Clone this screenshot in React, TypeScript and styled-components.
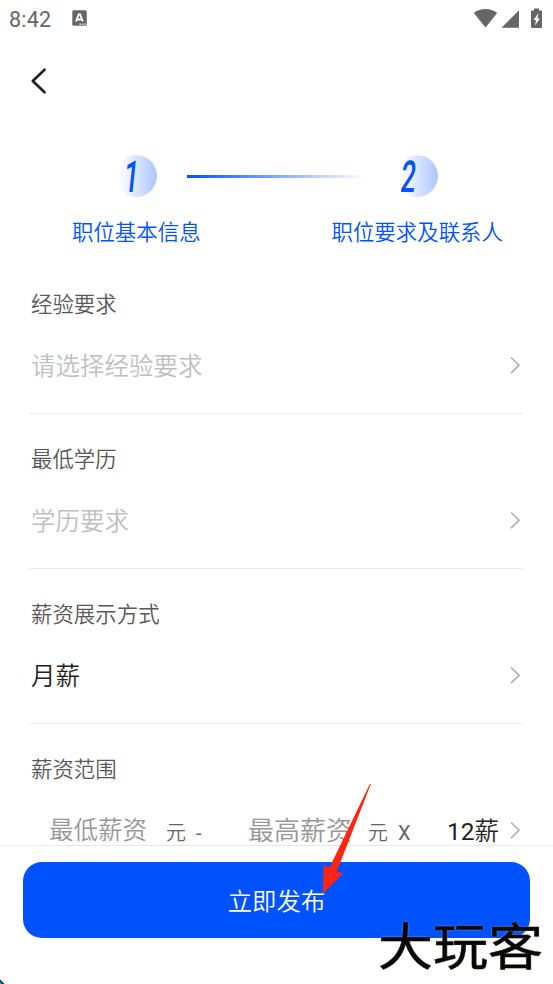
import React from 'react';
import styled, { createGlobalStyle } from 'styled-components';

const GlobalStyle = createGlobalStyle`
  * { box-sizing: border-box; }
  body { margin: 0; background: #fff; }
`;

const Screen = styled.div`
  position: relative;
  display: flex;
  flex-direction: column;
  width: 553px;
  height: 984px;
  overflow: hidden;
  background: #fff;
  font-family: Roboto, 'Noto Sans CJK SC', sans-serif;
  font-weight: 350;
`;

const StatusBar = styled.header`
  display: flex;
  align-items: center;
  height: 38px;
  padding: 0 10px 0 9px;
  color: #666;
`;

const Clock = styled.time`
  width: 63px;
  font-size: 21.5px;
  font-weight: 400;
  line-height: 38px;
  letter-spacing: 0.2px;
  padding-top: 1px;
`;

const StatusIcons = styled.div`
  display: flex;
  margin: -2px 0 0 auto;
`;

const NavBar = styled.nav`
  display: flex;
  height: 117px;
  padding: 29px 0 0 29px;
`;

const BackButton = styled.button`
  width: 20px;
  height: 28px;
  padding: 0;
  border: 0;
  background: none;
`;

const Steps = styled.section`
  height: 104px;
`;

const Markers = styled.div`
  display: flex;
  align-items: center;
  height: 42px;
  padding-left: 115px;
`;

const Marker = styled.div`
  display: flex;
  align-items: center;
  justify-content: center;
  width: 42px;
  height: 42px;
  border-radius: 50%;
  background: linear-gradient(90deg, #fff 8%, #dbe6ff 50%, #acc5ff 100%);
`;

const StepNumber = styled.span<{ $shift: number }>`
  color: #0052ff;
  font-size: 44px;
  font-weight: 500;
  line-height: 42px;
  transform: translate(${(p) => p.$shift}px, 1px) skewX(-6deg) scaleX(0.6);
`;

const Connector = styled.div`
  width: 178px;
  height: 3px;
  margin: 1px 31px 0 30px;
  background: linear-gradient(90deg, #0052ff, #fff);
`;

const StepLabels = styled.div`
  display: flex;
  justify-content: space-between;
  padding: 21px 50px 0 72px;
  color: #0052ff;
  font-size: 21.45px;
  line-height: 30px;
  white-space: nowrap;
`;

const Form = styled.main`
  flex: 1;
  min-height: 0;
  padding: 0 31px 0 30px;
  overflow: hidden;
`;

const Field = styled.section`
  height: 155px;
  padding-top: 31px;
  border-bottom: 1px solid #e6e6e6;
`;

const Label = styled.div`
  padding-left: 1px;
  color: #585858;
  font-size: 21.45px;
  line-height: 30px;
`;

const ValueRow = styled.div`
  display: flex;
  align-items: center;
  height: 36px;
  margin-top: 27px;
  padding-left: 1px;
`;

const Value = styled.span<{ $filled?: boolean }>`
  padding-top: 3px;
  color: ${(p) => (p.$filled ? '#222' : '#bfbfbf')};
  font-size: 24.5px;
  line-height: 36px;
`;

const Digits = styled.span`
  font-weight: 400;
`;

const Amount = styled.span<{ $width: number; $size: number }>`
  width: ${(p) => p.$width}px;
  flex: none;
  padding-top: 2px;
  color: #969696;
  font-size: ${(p) => p.$size}px;
  line-height: 36px;
  white-space: nowrap;
`;

const Unit = styled.span<{ $width: number; $latin?: boolean }>`
  width: ${(p) => p.$width}px;
  flex: none;
  padding-top: 5px;
  color: #666;
  font-size: 20px;
  font-weight: ${(p) => (p.$latin ? 400 : 350)};
  line-height: 34px;
`;

const SalaryRow = styled(ValueRow)`
  padding-left: 19px;
`;

const ChevronIcon = styled.svg`
  flex: none;
  margin-left: auto;
`;

const Footer = styled.footer`
  height: 139px;
  padding: 16px 23px 0;
  border-top: 1px solid #e6e6e6;
  background: #fff;
`;

const PublishButton = styled.button`
  display: block;
  width: 507px;
  height: 76px;
  padding: 0 0 1px;
  border: 0;
  border-radius: 19px;
  background: #0052ff;
  color: #fff;
  font: inherit;
  font-size: 24.4px;
`;

const Pointer = styled.svg`
  position: absolute;
  left: 318px;
  top: 780px;
`;

const Watermark = styled.div`
  position: absolute;
  left: 378px;
  top: 913px;
  color: #080808;
  font-family: 'Noto Sans CJK SC', sans-serif;
  font-size: 55px;
  font-weight: 400;
  line-height: 60px;
  white-space: nowrap;
  transform: scaleY(0.9);
  -webkit-text-stroke: 0.6px #080808;
  text-shadow: 0 0 2px #d8cdb0;
`;

const Corner = styled.svg`
  position: absolute;
  left: 0;
  bottom: 0;
`;

const Chevron = () => (
  <ChevronIcon width="13" height="20" viewBox="0 0 13 20" fill="none">
    <path d="M2 2.500 10 10.300l-8 7.800" stroke="#a9adb5" strokeWidth="1.600" />
  </ChevronIcon>
);

const fields = [
  { label: '经验要求', value: '请选择经验要求', filled: false },
  { label: '最低学历', value: '学历要求', filled: false },
  { label: '薪资展示方式', value: '月薪', filled: true },
];

export default function App() {
  return (
    <>
      <GlobalStyle />
      <Screen>
        <StatusBar>
          <Clock>8:42</Clock>
          <svg width="16" height="18" viewBox="0 0 16 18">
            <rect x="0.3" y="0.3" width="14.500" height="15.500" rx="1.500" fill="#666" />
            <path d="M4 11.500 6.700 4.500h1.500l2.700 7M5.200 9.500h4.600" fill="none" stroke="#fff" strokeWidth="1.800" />
            <path d="M7.500 14.200h1.400m1 0h1.400m1 0h1.400" stroke="#fff" strokeWidth="1.200" />
          </svg>
          <StatusIcons>
            <svg width="70" height="24" viewBox="0 0 70 24" fill="#666">
              <path d="M.8 7C7.500 1.700 17.500 1.700 24.200 7L12.500 21.500Z" />
              <path d="M46 4.200v17.600H28.500Z" />
              <path d="M61 2.500h5v2h2.200q.8 0 .8.8v15.800q0 .8-.8.8h-9.400q-.8 0-.8-.8V5.300q0-.8.8-.8H61Z" />
              <path d="M65.500 7 60.500 14h2.500l-1 5.500 5-7h-2.500Z" fill="#fff" />
            </svg>
          </StatusIcons>
        </StatusBar>
        <NavBar>
          <BackButton aria-label="返回">
            <svg width="20" height="28" viewBox="0 0 20 28" fill="none">
              <path d="M15.500 2.800 3.800 14l11.700 11.200" stroke="#222" strokeWidth="2.700" strokeLinecap="round" strokeLinejoin="round" />
            </svg>
          </BackButton>
        </NavBar>
        <Steps>
          <Markers>
            <Marker><StepNumber $shift={-4}>1</StepNumber></Marker>
            <Connector />
            <Marker><StepNumber $shift={-8}>2</StepNumber></Marker>
          </Markers>
          <StepLabels>
            <span>职位基本信息</span>
            <span>职位要求及联系人</span>
          </StepLabels>
        </Steps>
        <Form>
          {fields.map((f) => (
            <Field key={f.label}>
              <Label>{f.label}</Label>
              <ValueRow>
                <Value $filled={f.filled}>{f.value}</Value>
                <Chevron />
              </ValueRow>
            </Field>
          ))}
          <Field>
            <Label>薪资范围</Label>
            <SalaryRow>
              <Amount $width={117} $size={24.5}>最低薪资</Amount>
              <Unit $width={30}>元</Unit>
              <Unit $width={52} $latin>-</Unit>
              <Amount $width={120} $size={26}>最高薪资</Amount>
              <Unit $width={30}>元</Unit>
              <Unit $width={49} $latin>X</Unit>
              <Value $filled><Digits>12</Digits>薪</Value>
              <Chevron />
            </SalaryRow>
          </Field>
        </Form>
        <Footer>
          <PublishButton>立即发布</PublishButton>
        </Footer>
        <Pointer width="56" height="116" viewBox="0 0 56 116">
          <path d="M52 3.800 11.500 87.500 5.500 85 5 113.500 25 93.200 18.800 91.500 52.800 4.300Z" fill="#ff2414" />
        </Pointer>
        <Watermark>大玩客</Watermark>
        <Corner width="5" height="6" viewBox="0 0 5 6">
          <path d="M0 1.500 4 5.500V6H0Z" fill="#111" />
          <path d="M0 3 2.500 6H0Z" fill="#0a9bd0" />
        </Corner>
      </Screen>
    </>
  );
}
